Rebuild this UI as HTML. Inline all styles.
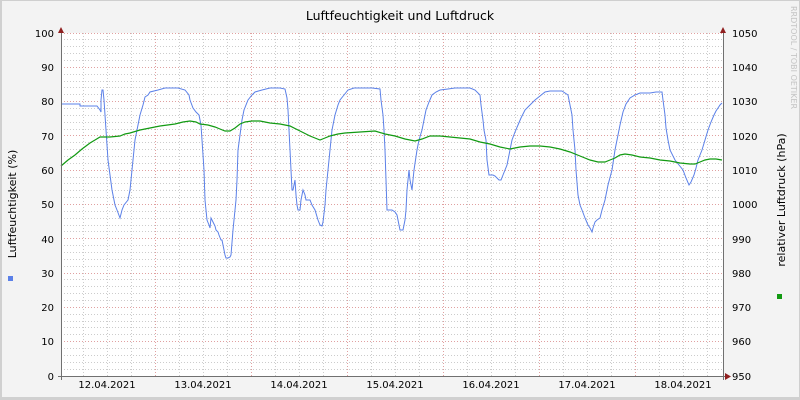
<!DOCTYPE html>
<html><head><meta charset="utf-8"><style>
html,body{margin:0;padding:0;background:#f3f3f3;}
svg{display:block;font-family:"DejaVu Sans","Liberation Sans",sans-serif;}
</style></head><body>
<svg width="800" height="400" viewBox="0 0 800 400" xmlns="http://www.w3.org/2000/svg">
<rect x="0" y="0" width="800" height="400" fill="#f3f3f3"/>
<rect x="0.5" y="0.5" width="799" height="399" fill="none" stroke="#cfcfcf" stroke-width="1"/>
<rect x="0" y="0" width="2" height="400" fill="#d0d0d0"/>
<rect x="0" y="397" width="800" height="3" fill="#d0d0d0"/>
<rect x="61" y="33" width="662" height="343" fill="#ffffff"/>
<g stroke="#cccccc" stroke-width="1" stroke-dasharray="1,2" fill="none" shape-rendering="crispEdges">
<path d="M61 369.5H723M61 362.5H723M61 355.5H723M61 348.5H723M61 334.5H723M61 327.5H723M61 321.5H723M61 314.5H723M61 300.5H723M61 293.5H723M61 286.5H723M61 279.5H723M61 266.5H723M61 259.5H723M61 252.5H723M61 245.5H723M61 231.5H723M61 225.5H723M61 218.5H723M61 211.5H723M61 197.5H723M61 190.5H723M61 183.5H723M61 177.5H723M61 163.5H723M61 156.5H723M61 149.5H723M61 142.5H723M61 129.5H723M61 122.5H723M61 115.5H723M61 108.5H723M61 94.5H723M61 87.5H723M61 81.5H723M61 74.5H723M61 60.5H723M61 53.5H723M61 46.5H723M61 39.5H723"/>
<path d="M83.5 33V376M107.5 33V376M131.5 33V376M179.5 33V376M203.5 33V376M227.5 33V376M275.5 33V376M299.5 33V376M323.5 33V376M371.5 33V376M395.5 33V376M419.5 33V376M467.5 33V376M491.5 33V376M515.5 33V376M563.5 33V376M587.5 33V376M611.5 33V376M659.5 33V376M683.5 33V376M707.5 33V376"/>
</g>
<g stroke="#e0a0a0" stroke-width="1" stroke-dasharray="1,2" fill="none" shape-rendering="crispEdges">
<path d="M61 341.5H723M61 307.5H723M61 273.5H723M61 238.5H723M61 204.5H723M61 170.5H723M61 135.5H723M61 101.5H723M61 67.5H723M61 33.5H723"/>
<path d="M155.5 33V376M251.5 33V376M347.5 33V376M443.5 33V376M539.5 33V376M635.5 33V376"/>
</g>
<polyline fill="none" stroke="#5b80e8" stroke-width="1" points="61,104 80,104 80,106 97,106 100,110 101,112 101,100 102,90 103,90 104,100 106,130 108,160 110,175 112,190 115,205 117,210 120,218 122,210 124,205 128,200 130,190 131,180 133,160 135,140 138,125 140,115 143,105 145,97 148,95 150,92 158,90 165,88 178,88 185,90 189,95 190,100 193,108 196,112 199,115 201,125 202,140 204,170 205,200 207,220 209,225 210,228 211,218 213,222 215,226 216,230 218,232 219,235 221,240 222,240 225,255 226,258 228,258 230,257 231,255 233,230 235,210 236,200 237,180 238,150 240,135 242,120 244,110 248,100 252,95 255,92 262,90 270,88 280,88 285,89 287,98 288,110 289,130 290,150 291,170 292,190 293,190 295,180 296,195 297,205 298,210 300,210 301,200 303,190 305,195 306,200 310,200 312,205 315,210 318,220 320,225 322,226 323,222 325,205 326,190 328,170 330,150 332,130 335,115 338,105 340,100 344,95 348,90 354,88 360,88 372,88 380,89 381,100 383,115 384,130 385,150 386,180 387,210 390,210 392,210 395,212 397,215 399,225 400,230 402,230 403,230 405,220 406,210 407,190 409,170 410,180 412,190 414,170 417,150 419,140 422,130 424,120 426,110 429,102 432,95 436,92 440,90 448,89 455,88 465,88 470,88 475,90 480,95 481,105 483,120 484,130 486,140 487,160 489,175 491,175 493,175 495,176 497,178 499,180 501,180 503,175 505,170 507,165 508,160 510,150 512,140 515,132 518,125 521,118 525,110 530,105 535,100 540,96 545,92 550,91 555,91 562,91 568,95 570,105 572,115 573,130 575,150 576,170 578,195 580,205 582,210 585,218 588,225 590,228 592,232 593,228 595,222 597,220 600,218 602,210 605,200 608,185 612,170 615,150 618,135 620,125 623,112 626,104 630,98 635,95 640,93 645,93 650,93 656,92 662,92 663,100 665,115 666,128 668,140 670,150 675,160 679,165 683,170 686,178 689,185 691,182 694,175 696,168 698,160 700,155 702,150 705,140 708,130 711,122 714,115 716,111 718,108 720,105 722,103"/>
<polyline fill="none" stroke="#129a12" stroke-width="1.2" points="61,166 68,160 75,155 82,149 90,143 95,140 100,137 110,137 120,136 125,134 130,133 140,130 150,128 160,126 175,124 183,122 190,121 196,122 200,124 208,125 215,127 220,129 225,131 230,131 235,128 240,124 245,122 252,121 260,121 270,123 280,124 290,126 300,131 310,136 320,140 325,138 330,136 338,134 345,133 360,132 375,131 385,134 395,136 405,139 415,141 422,139 430,136 440,136 450,137 460,138 470,139 480,142 490,144 500,147 510,149 520,147 530,146 540,146 550,147 560,149 570,152 580,156 590,160 598,162 605,162 610,160 615,158 620,155 625,154 632,155 640,157 650,158 660,160 670,161 680,163 690,164 695,164 700,162 705,160 710,159 716,159 722,160"/>
<line x1="61.5" y1="30" x2="61.5" y2="380" stroke="#707070" stroke-width="1"/>
<line x1="723.5" y1="30" x2="723.5" y2="380" stroke="#707070" stroke-width="1"/>
<line x1="58" y1="376.5" x2="728" y2="376.5" stroke="#707070" stroke-width="1"/>
<polygon points="58,33 64,33 61,27" fill="#902020"/>
<polygon points="720,33 726,33 723,27" fill="#902020"/>
<polygon points="725,373 725,380 731,376.5" fill="#902020"/>
<text x="400" y="20" font-size="12.5" text-anchor="middle" fill="#000">Luftfeuchtigkeit und Luftdruck</text>
<g font-size="10" fill="#000" text-anchor="end">
<text x="54" y="37">100</text><text x="54" y="71">90</text><text x="54" y="105">80</text><text x="54" y="140">70</text><text x="54" y="174">60</text><text x="54" y="208">50</text><text x="54" y="243">40</text><text x="54" y="277">30</text><text x="54" y="311">20</text><text x="54" y="345">10</text><text x="54" y="380">0</text>
</g>
<g font-size="10" fill="#000">
<text x="732" y="37">1050</text><text x="732" y="71">1040</text><text x="732" y="105">1030</text><text x="732" y="140">1020</text><text x="732" y="174">1010</text><text x="732" y="208">1000</text><text x="732" y="243">990</text><text x="732" y="277">980</text><text x="732" y="311">970</text><text x="732" y="345">960</text><text x="732" y="380">950</text>
</g>
<g font-size="10" fill="#000" text-anchor="middle">
<text x="107" y="388">12.04.2021</text><text x="203" y="388">13.04.2021</text><text x="299" y="388">14.04.2021</text><text x="395" y="388">15.04.2021</text><text x="491" y="388">16.04.2021</text><text x="587" y="388">17.04.2021</text><text x="683" y="388">18.04.2021</text>
</g>
<text transform="translate(16,204) rotate(-90)" font-size="11" text-anchor="middle" fill="#000">Luftfeuchtigkeit (%)</text>
<text transform="translate(785,200) rotate(-90)" font-size="11" text-anchor="middle" fill="#000">relativer Luftdruck (hPa)</text>
<text transform="translate(791,6) rotate(90)" font-size="8" fill="#c4c4c4">RRDTOOL / TOBI OETIKER</text>
<rect x="8" y="276" width="5" height="5" fill="#5b80e8"/>
<rect x="777" y="294" width="5" height="5" fill="#129a12"/>
</svg>
</body></html>
